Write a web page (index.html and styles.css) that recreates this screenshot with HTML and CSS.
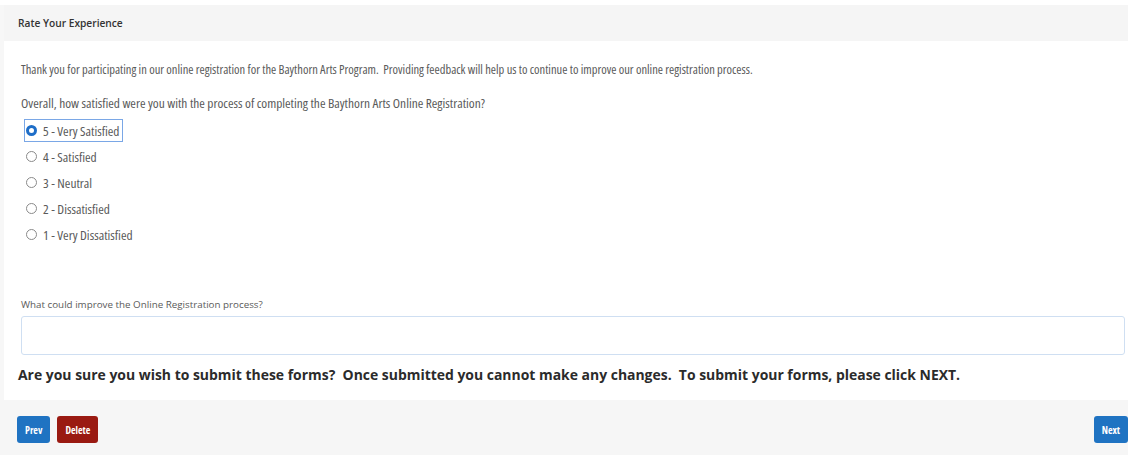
FILE: index.html
```html
<!DOCTYPE html>
<html>
<head>
<meta charset="utf-8">
<link rel="stylesheet" href="styles.css">
</head>
<body>
<div class="page">
  <div class="panel">
    <div class="panel-head">Rate Your Experience</div>
    <div class="panel-body">
      <p class="intro">Thank you for participating in our online registration for the Baythorn Arts Program.&nbsp; Providing feedback will help us to continue to improve our online registration process.</p>
      <p class="question">Overall, how satisfied were you with the process of completing the Baythorn Arts Online Registration?</p>
      <div class="options">
        <label class="option selected"><span class="radio checked"></span><span class="opt-text">5 - Very Satisfied</span></label>
        <label class="option"><span class="radio"></span><span class="opt-text">4 - Satisfied</span></label>
        <label class="option"><span class="radio"></span><span class="opt-text">3 - Neutral</span></label>
        <label class="option"><span class="radio"></span><span class="opt-text">2 - Dissatisfied</span></label>
        <label class="option"><span class="radio"></span><span class="opt-text">1 - Very Dissatisfied</span></label>
      </div>
      <p class="improve">What could improve the Online Registration process?</p>
      <div class="textbox"></div>
      <p class="confirm">Are you sure you wish to submit these forms?&nbsp; Once submitted you cannot make any changes.&nbsp; To submit your forms, please click NEXT.</p>
    </div>
  </div>
  <div class="footer">
    <div class="btn-group">
      <button class="btn btn-blue">Prev</button>
      <button class="btn btn-red">Delete</button>
    </div>
    <button class="btn btn-blue">Next</button>
  </div>
</div>
</body>
</html>
```
FILE: styles.css
```css
* { box-sizing: border-box; }
html, body { margin: 0; padding: 0; background: #ffffff; }
body { font-family: "Open Sans", "Liberation Sans", sans-serif; color: #5a5a5a; }

.page {
  width: 1128px;
  padding-top: 5px;
}

.panel {
  background: #f7f7f7;
  padding-left: 4px;
}

.panel-head {
  height: 36px;
  background: #f5f5f5;
  padding-left: 14px;
  font-size: 10.2px;
  line-height: 36px;
  color: #333;
  font-weight: 600;
}

.panel-body {
  background: #fff;
  padding: 22px 0 15px 17px;
}

.intro, .question {
  margin: 0;
  font-stretch: 75%;
  font-size: 12.5px;
  line-height: 14px;
  color: #5a5a5a;
}
.question { margin-top: 19px; font-size: 13.4px; }

.options {
  display: flex;
  flex-direction: column;
  align-items: flex-start;
  margin-top: 9px;
  margin-left: 3px;
}
.option {
  display: flex;
  align-items: center;
  height: 23px;
  margin-bottom: 3px;
  padding: 0 3px 0 1px;
  font-stretch: 75%;
  font-size: 13.4px;
  color: #5a5a5a;
  border: 1px solid transparent;
}
.option.selected { border-color: #7aa7e6; }
.radio {
  width: 11px;
  height: 11px;
  border: 1px solid #8a8a8a;
  border-radius: 50%;
  margin-right: 6px;
  flex: none;
}
.radio.checked {
  border: 3px solid #1e6ec8;
  background: #fff;
}

.improve {
  margin: 49px 0 0;
  font-size: 9.8px;
  line-height: 14px;
  color: #5a5a5a;
}

.textbox {
  margin-top: 4px;
  margin-right: 3px;
  height: 39px;
  border: 1px solid #cfdff2;
  border-radius: 3px;
  background: #fff;
}

.confirm {
  margin: 10px 0 0 -3px;
  font-size: 13.95px;
  line-height: 20px;
  font-weight: 700;
  color: #2b2b2b;
}

.footer {
  height: 55px;
  background: #f6f6f6;
  display: flex;
  align-items: center;
  justify-content: space-between;
  padding-left: 17px;
  padding-top: 4px;
}
.btn-group { display: flex; gap: 7px; }
.btn {
  height: 27px;
  border: none;
  border-radius: 3px;
  padding: 0 8px;
  font-family: "Open Sans", "Liberation Sans", sans-serif;
  font-stretch: 75%;
  font-size: 10px;
  font-weight: 700;
  color: #fff;
  cursor: pointer;
}
.btn-blue { background: #1f73c2; }
.btn-red { background: #9a1a12; }
```
